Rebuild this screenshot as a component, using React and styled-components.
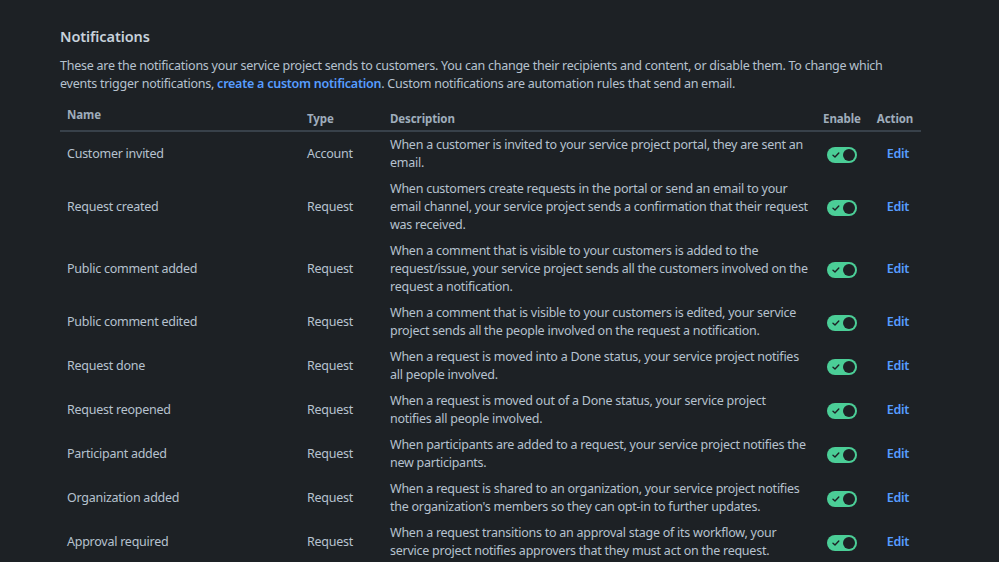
import styled, { createGlobalStyle } from "styled-components";

const GlobalStyle = createGlobalStyle`
    html, body {
        margin: 0;
        padding: 0;
        background: #1d2125;
    }
    body {
        font-family: "Noto Sans", "Open Sans", sans-serif;
        color: #b6c2cf;
    }
`;

const rows = [
    {
        name: "Customer invited",
        type: "Account",
        desc: "When a customer is invited to your service project portal, they are sent an email.",
    },
    {
        name: "Request created",
        type: "Request",
        desc: "When customers create requests in the portal or send an email to your email channel, your service project sends a confirmation that their request was received.",
    },
    {
        name: "Public comment added",
        type: "Request",
        desc: "When a comment that is visible to your customers is added to the request/issue, your service project sends all the customers involved on the request a notification.",
    },
    {
        name: "Public comment edited",
        type: "Request",
        desc: "When a comment that is visible to your customers is edited, your service project sends all the people involved on the request a notification.",
    },
    {
        name: "Request done",
        type: "Request",
        desc: "When a request is moved into a Done status, your service project notifies all people involved.",
    },
    {
        name: "Request reopened",
        type: "Request",
        desc: "When a request is moved out of a Done status, your service project notifies all people involved.",
    },
    {
        name: "Participant added",
        type: "Request",
        desc: "When participants are added to a request, your service project notifies the new participants.",
    },
    {
        name: "Organization added",
        type: "Request",
        desc: "When a request is shared to an organization, your service project notifies the organization's members so they can opt-in to further updates.",
    },
    {
        name: "Approval required",
        type: "Request",
        desc: "When a request transitions to an approval stage of its workflow, your service project notifies approvers that they must act on the request.",
    },
];

const Toggle = () => (
    <Switch>
        <svg width="10" height="10" viewBox="0 0 10 10">
            <path
                d="M2 5.2 L4 7 L7.8 3"
                fill="none"
                stroke="#1d2125"
                strokeWidth="1.4"
                strokeLinecap="round"
                strokeLinejoin="round"
            />
        </svg>
        <Knob />
    </Switch>
);

const App = () => {
    return (
        <>
            <GlobalStyle />
            <Page>
                <Title>Notifications</Title>
                <Intro>
                    These are the notifications your service project sends to
                    customers. You can change their recipients and content, or
                    disable them. To change which events trigger notifications,{" "}
                    <Link href="#">create a custom notification</Link>. Custom
                    notifications are automation rules that send an email.
                </Intro>
                <Table>
                    <colgroup>
                        <col style={{ width: 240 }} />
                        <col style={{ width: 83 }} />
                        <col style={{ width: 432 }} />
                        <col style={{ width: 54 }} />
                        <col style={{ width: 52 }} />
                    </colgroup>
                    <thead>
                        <tr>
                            <Th $raised>Name</Th>
                            <Th>Type</Th>
                            <Th>Description</Th>
                            <Th $center>Enable</Th>
                            <Th $center>Action</Th>
                        </tr>
                    </thead>
                    <tbody>
                        {rows.map((row) => (
                            <tr key={row.name}>
                                <Td>{row.name}</Td>
                                <Td>{row.type}</Td>
                                <Td>{row.desc}</Td>
                                <Td $center>
                                    <Toggle />
                                </Td>
                                <Td $center>
                                    <EditLink href="#">Edit</EditLink>
                                </Td>
                            </tr>
                        ))}
                    </tbody>
                </Table>
            </Page>
        </>
    );
};

export default App;

const Page = styled.div`
    padding: 26px 0 0 60px;
    width: 861px;
    font-size: 12.5px;
    letter-spacing: -0.25px;
`;

const Title = styled.h2`
    margin: 0;
    font-size: 14.5px;
    line-height: 20px;
    font-weight: 600;
    letter-spacing: -0.1px;
    color: #c7d1db;
`;

const Intro = styled.p`
    margin: 11px 0 0 0;
    line-height: 18px;
`;

const Link = styled.a`
    color: #579dff;
    font-weight: 600;
    text-decoration: none;
`;

const Table = styled.table`
    margin-top: 8px;
    width: 861px;
    table-layout: fixed;
    border-collapse: collapse;
    line-height: 18px;
`;

const Th = styled.th`
    padding: 10px 7px 3px;
    line-height: 16px;
    font-size: 11.5px;
    font-weight: 700;
    letter-spacing: -0.1px;
    color: #9fadbc;
    text-align: ${({ $center }) => ($center ? "center" : "left")};
    border-bottom: 2px solid #38414a;
    vertical-align: bottom;
    ${({ $raised }) => $raised && "position: relative; top: -4px;"}
`;

const Td = styled.td`
    padding: 4px 7px;
    vertical-align: middle;
    text-align: ${({ $center }) => ($center ? "center" : "left")};
`;

const Switch = styled.span`
    display: inline-flex;
    align-items: center;
    justify-content: space-between;
    width: 30px;
    height: 16px;
    padding: 0 2px 0 4px;
    box-sizing: border-box;
    border-radius: 8px;
    background: #4bce97;
    vertical-align: middle;
`;

const Knob = styled.span`
    width: 12px;
    height: 12px;
    border-radius: 50%;
    background: #1d2125;
`;

const EditLink = styled.a`
    color: #579dff;
    font-weight: 600;
    text-decoration: none;
    padding-left: 6px;
`;
